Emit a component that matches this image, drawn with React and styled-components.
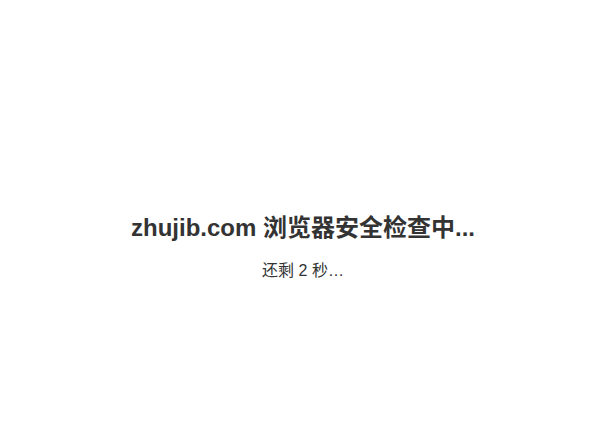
import React from "react";
import styled, { createGlobalStyle } from "styled-components";

const Global = createGlobalStyle`
  html, body { margin: 0; padding: 0; background: #fff; }
  body { font-family: "Liberation Sans", "Noto Sans CJK SC", Arial, sans-serif; color: #333; }
`;

const Page = styled.div`
  height: 422px;
  display: flex;
  flex-direction: column;
  align-items: center;
  justify-content: flex-start;
  padding: 213px 10px 0 0;
  box-sizing: border-box;
`;

const Title = styled.h1`
  margin: 0;
  font-size: 24px;
  line-height: 30px;
  font-weight: bold;
  color: #333;
`;

const Sub = styled.p`
  margin: 18px 0 0;
  font-size: 16px;
  line-height: 20px;
  color: #333;
`;

export default function App() {
  return (
    <>
      <Global />
      <Page>
        <Title>zhujib.com 浏览器安全检查中...</Title>
        <Sub>还剩 2 秒…</Sub>
      </Page>
    </>
  );
}
